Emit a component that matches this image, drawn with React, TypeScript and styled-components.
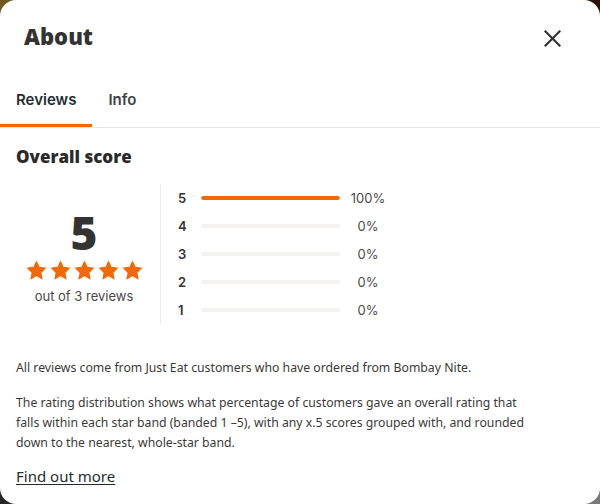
import React, { useState } from 'react';
import styled, { createGlobalStyle } from 'styled-components';

const GlobalStyle = createGlobalStyle`
  html, body {
    margin: 0;
    padding: 0;
    width: 600px;
    height: 504px;
    overflow: hidden;
    background:
      linear-gradient(to right, #6e5a1f, #2c1207) top / 100% 50% no-repeat,
      linear-gradient(to right, #262626, #7a7a7a) bottom / 100% 50% no-repeat;
  }
  * { box-sizing: border-box; }
`;

const Modal = styled.div`
  width: 600px;
  height: 504px;
  background: #fff;
  border-radius: 16px;
  overflow: hidden;
  color: #242e30;
  font-family: 'Noto Sans', sans-serif;
`;

const Header = styled.header`
  display: flex;
  align-items: center;
  justify-content: space-between;
  padding: 20px 37px 20px 24px;
`;

const Title = styled.h1`
  margin: 0;
  font-family: 'Noto Sans', sans-serif;
  font-weight: 900;
  font-size: 22px;
  line-height: 32px;
  color: #333;
`;

const CloseButton = styled.button`
  width: 22px;
  height: 22px;
  margin-top: 4px;
  padding: 0;
  border: 0;
  background: none;
  display: flex;
  align-items: center;
  justify-content: center;
  cursor: pointer;
`;

const TabList = styled.div`
  display: flex;
  border-bottom: 1px solid #e6e6e6;
`;

const Tab = styled.button<{ active: boolean }>`
  border: 0;
  background: none;
  padding: 18px 16px 14px;
  font-family: Inter, sans-serif;
  font-size: 15px;
  font-weight: 600;
  line-height: 20px;
  color: ${(p) => (p.active ? '#242e30' : '#3c4446')};
  border-bottom: 3px solid ${(p) => (p.active ? '#f36805' : 'transparent')};
  cursor: pointer;
`;

const Content = styled.div`
  padding: 17px 16px 0;
`;

const SectionTitle = styled.h2`
  margin: 0;
  font-family: 'Open Sans', sans-serif;
  font-weight: 800;
  font-size: 17px;
  line-height: 24px;
  color: #2a2a2a;
`;

const ScoreSection = styled.div`
  display: flex;
  margin-top: 15px;
  height: 140px;
`;

const Summary = styled.div`
  width: 136px;
  margin-right: 8px;
  display: flex;
  flex-direction: column;
  align-items: center;
  justify-content: center;
  padding-top: 6px;
`;

const BigScore = styled.div`
  font-family: 'Noto Sans', sans-serif;
  font-weight: 900;
  font-size: 46px;
  line-height: 44px;
  color: #333;
`;

const Stars = styled.div`
  display: flex;
  gap: 3px;
  margin-top: 6px;
`;

const ReviewCount = styled.div`
  margin-top: 7px;
  font-family: Inter, sans-serif;
  font-size: 13px;
  line-height: 18px;
  color: #4a4a4a;
`;

const Distribution = styled.div`
  border-left: 1px solid #ececec;
  padding-left: 17px;
  display: flex;
  flex-direction: column;
`;

const Row = styled.div`
  display: flex;
  align-items: center;
  height: 28px;
`;

const RowLabel = styled.span`
  width: 23px;
  font-family: Inter, sans-serif;
  font-weight: 600;
  font-size: 13px;
  color: #333;
`;

const Track = styled.div`
  width: 139px;
  height: 4px;
  border-radius: 2px;
  background: #f5f3f1;
  overflow: hidden;
`;

const Fill = styled.div`
  height: 100%;
  border-radius: 2px;
  background: #f36805;
`;

const Percent = styled.span`
  width: 44px;
  margin-left: 6px;
  text-align: center;
  font-family: Inter, sans-serif;
  font-size: 13px;
  color: #4a4a4a;
`;

const Paragraph = styled.p<{ gap: number }>`
  margin: ${(p) => p.gap}px 0 0;
  font-size: 12.25px;
  line-height: 20px;
  color: #3a3a3a;
  white-space: nowrap;
`;

const MoreLink = styled.a`
  display: inline-block;
  margin-top: 13px;
  font-size: 15px;
  line-height: 20px;
  color: #242e30;
  text-decoration: underline;
  text-underline-offset: 2px;
`;

const Star = () => (
  <svg width="21" height="20" viewBox="0 0 24 23">
    <path
      fill="#f36805"
      d="M12 0.6l3.5 7.3 8 1.1-5.8 5.6 1.4 8-7.1-3.8-7.1 3.8 1.4-8L0.5 9l8-1.1z"
    />
  </svg>
);

const bands = [
  { star: 5, pct: 100 },
  { star: 4, pct: 0 },
  { star: 3, pct: 0 },
  { star: 2, pct: 0 },
  { star: 1, pct: 0 },
];

export default function App() {
  const [tab, setTab] = useState('reviews');

  return (
    <>
      <GlobalStyle />
      <Modal>
        <Header>
          <Title>About</Title>
          <CloseButton aria-label="Close">
            <svg width="17" height="17" viewBox="0 0 17 17">
              <path d="M1.5 1.5l14 14M15.5 1.5l-14 14" stroke="#333" strokeWidth="2.2" strokeLinecap="square" />
            </svg>
          </CloseButton>
        </Header>
        <TabList>
          <Tab active={tab === 'reviews'} onClick={() => setTab('reviews')}>Reviews</Tab>
          <Tab active={tab === 'info'} onClick={() => setTab('info')}>Info</Tab>
        </TabList>
        <Content>
          <SectionTitle>Overall score</SectionTitle>
          <ScoreSection>
            <Summary>
              <BigScore>5</BigScore>
              <Stars>
                {[0, 1, 2, 3, 4].map((i) => (
                  <Star key={i} />
                ))}
              </Stars>
              <ReviewCount>out of 3 reviews</ReviewCount>
            </Summary>
            <Distribution>
              {bands.map((b) => (
                <Row key={b.star}>
                  <RowLabel>{b.star}</RowLabel>
                  <Track>
                    <Fill style={{ width: `${b.pct}%` }} />
                  </Track>
                  <Percent>{b.pct}%</Percent>
                </Row>
              ))}
            </Distribution>
          </ScoreSection>
          <Paragraph gap={34}>
            All reviews come from Just Eat customers who have ordered from Bombay Nite.
          </Paragraph>
          <Paragraph gap={15}>
            The rating distribution shows what percentage of customers gave an overall rating that
            <br />
            falls within each star band (banded 1 –5), with any x.5 scores grouped with, and rounded
            <br />
            down to the nearest, whole-star band.
          </Paragraph>
          <MoreLink href="#">Find out more</MoreLink>
        </Content>
      </Modal>
    </>
  );
}
